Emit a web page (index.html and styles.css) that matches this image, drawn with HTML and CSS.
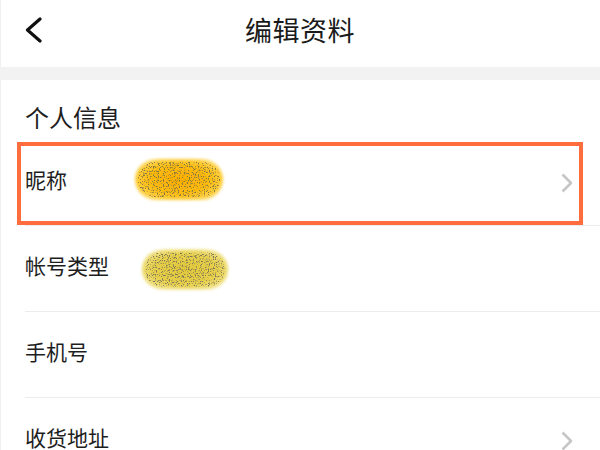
FILE: index.html
```html
<!DOCTYPE html>
<html lang="zh-CN">
<head>
<meta charset="utf-8">
<title>编辑资料</title>
<link rel="stylesheet" href="styles.css">
</head>
<body>
<div class="page">
  <header class="topbar">
    <a class="back" href="#">
      <svg width="19" height="26" viewBox="0 0 19 26"><path d="M16 2 L3.5 13 L16 24" fill="none" stroke="#111" stroke-width="3.2" stroke-linecap="round" stroke-linejoin="round"/></svg>
    </a>
    <h1 class="title">编辑资料</h1>
    <span class="spacer"></span>
  </header>
  <div class="band"></div>
  <section class="group">
    <h2 class="group-title">个人信息</h2>
    <div class="list">
      <div class="row">
        <span class="label">昵称</span>
        <svg class="blob blob-orange" width="94" height="49" viewBox="0 0 94 49">
          <defs>
            <radialGradient id="go" cx="50%" cy="50%" r="62%">
              <stop offset="0%" stop-color="#ffae00"/>
              <stop offset="55%" stop-color="#ffbb10"/>
              <stop offset="82%" stop-color="#ffd040"/>
              <stop offset="100%" stop-color="#ffeaa8"/>
            </radialGradient>
            <filter id="soft" x="-20%" y="-20%" width="140%" height="140%"><feGaussianBlur stdDeviation="1.8"/></filter>
            <filter id="speck" x="0" y="0" width="100%" height="100%">
              <feTurbulence type="fractalNoise" baseFrequency="0.8" numOctaves="2" seed="3" result="n"/>
              <feColorMatrix in="n" type="matrix" values="0 0 0 0 0.22  0 0 0 0 0.18  0 0 0 0 0.05  6 0 0 0 -3.2" result="d"/>
              <feComposite in="d" in2="SourceGraphic" operator="in"/>
            </filter>
          </defs>
          <rect x="3" y="4" width="88" height="41" rx="20.5" fill="url(#go)" filter="url(#soft)"/>
          <rect x="6" y="7" width="82" height="35" rx="17.5" fill="#000" filter="url(#speck)"/>
        </svg>
        <svg class="chev" width="14" height="22" viewBox="0 0 14 22"><path d="M2.5 2.5 L11 11 L2.5 19.5" fill="none" stroke="#c6c6c6" stroke-width="2.6" stroke-linejoin="round"/></svg>
        <div class="mark"></div>
      </div>
      <div class="row">
        <span class="label">帐号类型</span>
        <svg class="blob blob-yellow" width="92" height="47" viewBox="0 0 92 47">
          <defs>
            <radialGradient id="gy" cx="50%" cy="50%" r="62%">
              <stop offset="0%" stop-color="#e3c938"/>
              <stop offset="60%" stop-color="#e8d04a"/>
              <stop offset="84%" stop-color="#efdf7a"/>
              <stop offset="100%" stop-color="#f8f0c4"/>
            </radialGradient>
            <filter id="speck2" x="0" y="0" width="100%" height="100%">
              <feTurbulence type="fractalNoise" baseFrequency="0.85" numOctaves="2" seed="8" result="n"/>
              <feColorMatrix in="n" type="matrix" values="0 0 0 0 0.2  0 0 0 0 0.18  0 0 0 0 0.1  6 0 0 0 -3.2" result="d"/>
              <feComposite in="d" in2="SourceGraphic" operator="in"/>
            </filter>
          </defs>
          <rect x="3" y="3.5" width="86" height="40" rx="20" fill="url(#gy)" filter="url(#soft)"/>
          <rect x="6" y="6.5" width="80" height="34" rx="17" fill="#000" filter="url(#speck2)"/>
        </svg>
      </div>
      <div class="row">
        <span class="label">手机号</span>
      </div>
      <div class="row">
        <span class="label">收货地址</span>
        <svg class="chev" width="14" height="22" viewBox="0 0 14 22"><path d="M2.5 2.5 L11 11 L2.5 19.5" fill="none" stroke="#c6c6c6" stroke-width="2.6" stroke-linejoin="round"/></svg>
      </div>
    </div>
  </section>
</div>
</body>
</html>
```

FILE: styles.css
```css
html, body {
  margin: 0;
  padding: 0;
  background: #ffffff;
}

body {
  font-family: "Noto Sans CJK SC", "Noto Sans", sans-serif;
  color: #1e1e1e;
}

.page {
  width: 600px;
  height: 450px;
  box-shadow: inset 1px 0 0 #f0f0f0;
  overflow: hidden;
}

.topbar {
  height: 67px;
  box-sizing: border-box;
  padding-bottom: 7px;
  display: grid;
  grid-template-columns: 1fr auto 1fr;
  align-items: center;
}

.back {
  display: flex;
  align-items: center;
  padding-left: 24px;
  text-decoration: none;
}

.title {
  margin: 0;
  font-size: 27px;
  font-weight: 400;
  line-height: 34px;
  color: #1a1a1a;
  letter-spacing: 0.5px;
}

.band {
  height: 13px;
  background: #f2f2f2;
}

.group-title {
  margin: 0;
  box-sizing: border-box;
  height: 60px;
  padding: 22px 0 8px 25px;
  font-size: 24px;
  font-weight: 400;
  line-height: 30px;
  color: #1e1e1e;
}

.list {
  padding-left: 25px;
}

.row {
  position: relative;
  height: 86px;
  box-sizing: border-box;
  padding-bottom: 7px;
  border-bottom: 1px solid #ececec;
  display: flex;
  align-items: center;
}

.label {
  width: 108px;
  flex: none;
  font-size: 21px;
  line-height: 28px;
  color: #1e1e1e;
}

.blob {
  flex: none;
  display: block;
}

.blob-orange {
  margin-left: -1px;
}

.blob-yellow {
  margin-left: 6px;
  margin-top: 9px;
}

.chev {
  display: block;
  flex: none;
  margin-left: auto;
  margin-right: 26px;
  margin-top: 7px;
}

.mark {
  position: absolute;
  top: 2px;
  bottom: 0;
  left: -8px;
  right: 17px;
  border: 4.5px solid #ff6c3e;
  box-sizing: border-box;
  pointer-events: none;
}
```
